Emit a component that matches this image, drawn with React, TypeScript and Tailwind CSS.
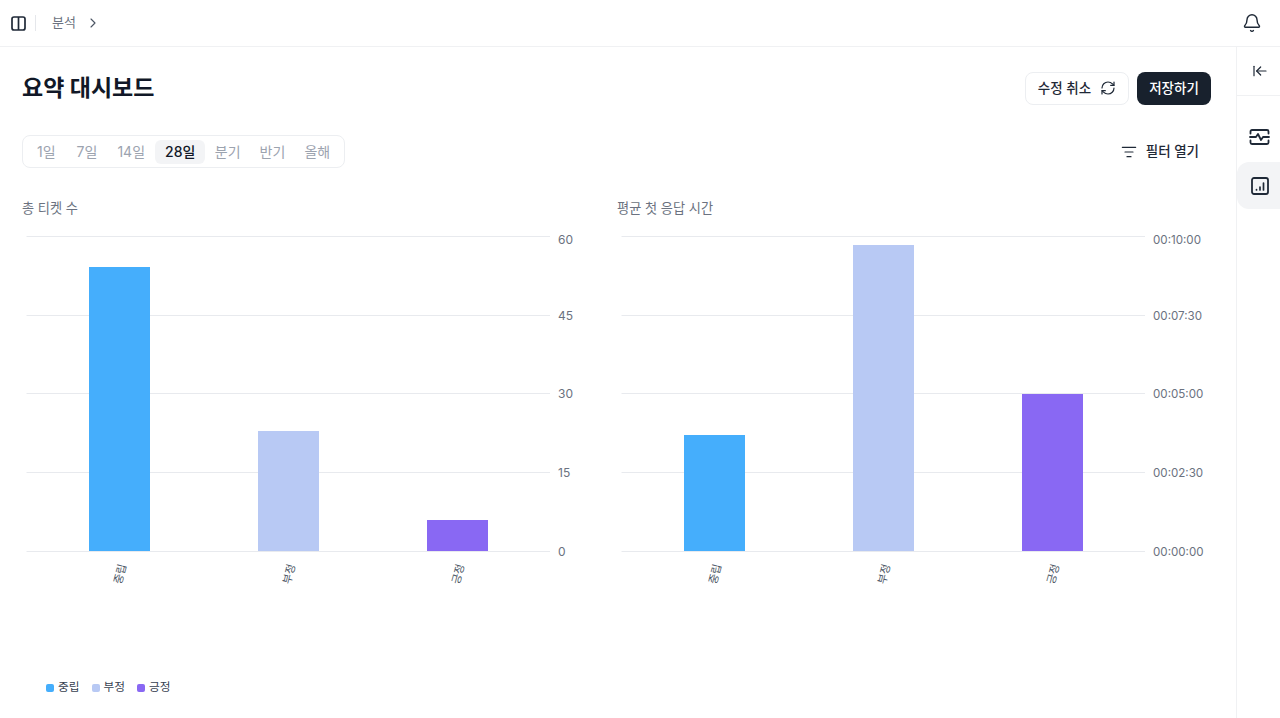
import { ArrowLeftToLine, Bell, ChevronRight, ListFilter, RefreshCw } from 'lucide-react'

const font = { fontFamily: 'Inter, "Noto Sans CJK KR", sans-serif' }

const RANGES = [
  { label: '1일', pad: 'pl-[10px] pr-[11px]' },
  { label: '7일', pad: 'px-[10px]' },
  { label: '14일', pad: 'px-[10px]' },
  { label: '28일', pad: 'px-[10px]' },
  { label: '분기', pad: 'px-[9.5px]' },
  { label: '반기', pad: 'px-[9.5px]' },
  { label: '올해', pad: 'px-[9.5px]' },
]

const BLUE = '#45aefc'
const PERIWINKLE = '#b8c9f4'
const PURPLE = '#8968f3'

const LEGEND = [
  { label: '중립', color: 'bg-[#45aefc]' },
  { label: '부정', color: 'bg-[#b8c9f4]' },
  { label: '긍정', color: 'bg-[#8968f3]' },
]

const GRID_Y = [4, 83, 161.5, 240, 319]

function BarChart({ title, ticks, tickSize, bars }: { title: string; ticks: string[]; tickSize: number; bars: { x: number; top: number; color: string; label: string }[] }) {
  return (
    <div className="w-[590px]">
      <div className="text-[13.2px] leading-5 text-[#6b7280]">{title}</div>
      <svg width="590" height="360" className="mt-[14px] block">
        {GRID_Y.map((y, i) => (
          <g key={y}>
            <line x1="4.5" x2="528" y1={Math.floor(y) + 0.5} y2={Math.floor(y) + 0.5} stroke="#e8eaee" />
            <text x="536" y={i === 0 ? y + 8 : i < 3 ? y + 4.5 : y + 5} fontSize={tickSize} fill="#6b7280">{ticks[i]}</text>
          </g>
        ))}
        {bars.map(b => (
          <g key={b.label}>
            <rect x={b.x} y={b.top} width="61" height={319 - b.top} fill={b.color} />
            <text
              x={b.x + 31}
              y={346}
              fontSize="11"
              fill="#4b5563"
              textAnchor="middle"
              transform={`rotate(-75 ${b.x + 31} 342)`}
            >
              {b.label}
            </text>
          </g>
        ))}
      </svg>
    </div>
  )
}

export default function App() {
  return (
    <div style={font} className="flex h-[718px] w-[1280px] flex-col overflow-hidden bg-white text-[#111827]">
      <header className="flex h-[47px] shrink-0 items-center border-b border-[#f0f1f3] pl-[11px] pr-[18px]">
        <svg width="15" height="15" viewBox="0 0 15 15" fill="none" stroke="#1f2937" strokeWidth="1.7">
          <rect x="1" y="1" width="13" height="13" rx="2" />
          <path d="M7.5 1v13" />
        </svg>
        <div className="ml-[9px] h-4 w-px bg-[#e5e7eb]" />
        <span className="ml-[16px] text-[13px] text-[#6b7280]">분석</span>
        <ChevronRight className="ml-[9px] h-4 w-4 text-[#4b5563]" strokeWidth={1.7} />
        <Bell className="ml-auto h-5 w-5 text-[#1f2937]" strokeWidth={1.7} />
      </header>

      <div className="flex min-h-0 flex-1">
        <main className="min-w-0 flex-1 pl-[22px] pr-[25px]">
          <div className="flex h-[82px] items-center justify-between">
            <h1 className="pt-[1px] text-[23px] font-bold text-[#111827]">요약 대시보드</h1>
            <div className="flex items-center gap-2">
              <button className="flex h-[33px] w-[104px] items-center justify-center gap-[9px] rounded-lg border border-[#eceef1] text-[13.5px] font-medium text-[#1f2937]">
                수정 취소
                <RefreshCw className="h-4 w-4" strokeWidth={1.8} />
              </button>
              <button className="h-[33px] w-[74px] rounded-lg bg-[#18212d] text-[13.5px] font-medium text-white">저장하기</button>
            </div>
          </div>

          <div className="mt-[6px] flex items-center justify-between">
            <div className="flex h-[33px] items-center rounded-lg border border-[#eceef1] px-[4px]">
              {RANGES.map(r => (
                <span
                  key={r.label}
                  className={`flex h-6 items-center text-[14px] ${r.pad} ${
                    r.label === '28일' ? 'rounded-md bg-[#f3f4f6] font-medium text-[#111827]' : 'text-[#9ca3af]'
                  }`}
                >
                  {r.label}
                </span>
              ))}
            </div>
            <div className="mr-[12px] flex items-center gap-[9px] text-[13.5px] font-medium text-[#1f2937]">
              <ListFilter className="h-4 w-4" strokeWidth={1.8} />
              필터 열기
            </div>
          </div>

          <div className="mt-[30px] flex gap-[5px]">
            <BarChart
              title="총 티켓 수"
              tickSize={12}
              ticks={['60', '45', '30', '15', '0']}
              bars={[
                { x: 67, top: 35, color: BLUE, label: '중립' },
                { x: 236, top: 199, color: PERIWINKLE, label: '부정' },
                { x: 405, top: 288, color: PURPLE, label: '긍정' },
              ]}
            />
            <BarChart
              title="평균 첫 응답 시간"
              tickSize={11.6}
              ticks={['00:10:00', '00:07:30', '00:05:00', '00:02:30', '00:00:00']}
              bars={[
                { x: 67, top: 203, color: BLUE, label: '중립' },
                { x: 236, top: 13, color: PERIWINKLE, label: '부정' },
                { x: 405, top: 162, color: PURPLE, label: '긍정' },
              ]}
            />
          </div>

          <div className="mt-[87px] flex gap-[12px] pl-[24px]">
            {LEGEND.map(l => (
              <div key={l.label} className="flex items-center gap-[4px] text-[11.7px] text-[#374151]">
                <span className={`h-2 w-2 rounded-[2px] ${l.color}`} />
                {l.label}
              </div>
            ))}
          </div>
        </main>

        <aside className="flex w-[44px] shrink-0 flex-col border-l border-[#f0f1f3]">
          <div className="flex h-[49px] items-center justify-center border-b border-[#f0f1f3] pl-[2px]">
            <ArrowLeftToLine className="h-4 w-4 text-[#1f2937]" strokeWidth={1.8} />
          </div>
          <div className="mt-[17px] flex h-[49px] items-center justify-center pb-[2px] pl-[2px]">
            <svg width="21" height="16" viewBox="0 0 21 16" fill="none" stroke="#1f2937" strokeWidth="1.8" strokeLinecap="round" strokeLinejoin="round">
              <path d="M1.5 4.5V2.5a1.5 1.5 0 0 1 1.5-1.5h15a1.5 1.5 0 0 1 1.5 1.5v2" />
              <path d="M1.5 11.5v2a1.5 1.5 0 0 0 1.5 1.5h15a1.5 1.5 0 0 0 1.5-1.5v-2" />
              <path d="M1 8h6l2-3 3 6 2-3h6" />
            </svg>
          </div>
          <div className="flex h-[47px] items-center justify-center rounded-l-xl bg-[#f3f4f6] pl-[2px]">
            <svg width="18" height="18" viewBox="0 0 18 18" fill="none" stroke="#1f2937" strokeLinecap="round">
              <rect x="1" y="1" width="16" height="16" rx="2" strokeWidth="1.8" />
              <path d="M5.5 12.5v.5M9 10v3M12.5 6v7" strokeWidth="1.7" />
            </svg>
          </div>
        </aside>
      </div>
    </div>
  )
}
